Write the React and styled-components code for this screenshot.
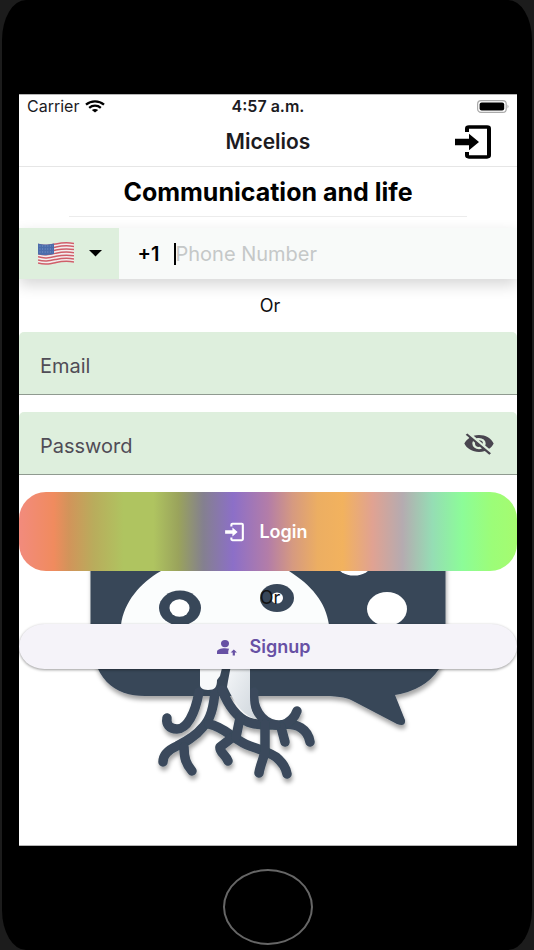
import React, { useState } from 'react'
import styled, { createGlobalStyle } from 'styled-components'

const GlobalStyle = createGlobalStyle`
    * {
        box-sizing: border-box;
    }

    body {
        margin: 0;
        background: #1c1c1c;
    }

    button, input {
        font: inherit;
        color: inherit;
        border: 0;
        padding: 0;
        margin: 0;
        background: none;
        outline: none;
    }

    button {
        cursor: pointer;
    }

    svg {
        display: block;
        flex-shrink: 0;
    }
`

const Device = styled.div`
    display: flex;
    flex-direction: column;
    min-height: 100vh;
    margin: 0 2px;
    padding: 94px 15px 5px 17px;
    background: #000;
    border-radius: 24px / 40px;
    font-family: Inter, "Liberation Sans", sans-serif;
    color: #1c1b1f;
`

const Screen = styled.main`
    display: flex;
    flex-direction: column;
    flex: 1;
    background: #fff;
    border: 1px solid #b5b5b5;
    border-width: 1px 0 1px 0;
    overflow: hidden;
`

const StatusBar = styled.div`
    display: grid;
    grid-template-columns: 1fr auto 1fr;
    align-items: center;
    height: 22px;
    padding: 0 8px;
    font-size: 16px;
    line-height: 20px;
`

const Carrier = styled.div`
    display: flex;
    align-items: center;
    gap: 6px;
`

const Clock = styled.time`
    font-weight: 600;
`

const BatterySlot = styled.div`
    justify-self: end;
`

const Header = styled.header`
    display: grid;
    grid-template-columns: 1fr auto 1fr;
    align-items: center;
    height: 50px;
    padding: 0 20px;
    border-bottom: 1px solid #e6e6e6;
`

const Title = styled.h2`
    grid-column: 2;
    margin: 0;
    font-size: 21px;
    line-height: 24px;
    font-weight: 600;
`

const HeaderButton = styled.button`
    justify-self: end;
    color: #000;
`

const Heading = styled.h1`
    width: 80%;
    margin: 0 auto 11px;
    padding: 9px 0 8px;
    border-bottom: 1px solid #ececec;
    font-size: 25px;
    line-height: 32px;
    font-weight: 700;
    text-align: center;
    white-space: nowrap;
    color: #000;
`

const PhoneRow = styled.div`
    display: flex;
    height: 51px;
    background: #f8faf9;
    box-shadow: 0 6px 14px rgba(0, 0, 0, 0.16);
    font-size: 20px;
    line-height: 24px;
`

const CountryButton = styled.button`
    display: flex;
    align-items: center;
    justify-content: center;
    gap: 15px;
    width: 20%;
    padding-left: 2px;
    background: #deefdd;
`

const PhoneLabel = styled.label`
    display: flex;
    align-items: center;
    flex: 1;
    gap: 14px;
    min-width: 0;
    padding-left: 19px;
    font-weight: 600;
    color: #000;
`

const PhoneInput = styled.input`
    flex: 1;
    min-width: 0;
    height: 22px;
    border-left: 2px solid #000;
    font-weight: 400;

    &::placeholder {
        color: #c5c8c8;
        opacity: 1;
    }
`

const Or = styled.p`
    position: relative;
    margin: 0;
    padding: 16px 0 16px 4px;
    font-size: 18px;
    line-height: 21px;
    text-align: center;
    color: #111;
`

const Field = styled.label`
    display: flex;
    align-items: center;
    gap: 12px;
    height: 63px;
    margin-bottom: 17px;
    padding: 6px 22px 0 21px;
    background: #deefdd;
    border-bottom: 1px solid #8f9a90;
    border-radius: 5px 5px 0 0;
    font-size: 20px;
    line-height: 24px;
    color: #504c56;
`

const FieldInput = styled.input`
    flex: 1;
    min-width: 0;
`

const EyeButton = styled.button`
    padding-bottom: 6px;
`

const Actions = styled.div`
    position: relative;
    display: flex;
    flex-direction: column;
    flex: 1;
`

const Mascot = styled.svg`
    position: absolute;
    top: 0;
    left: 0;
    width: 100%;
`

const ActionButton = styled.button`
    position: relative;
    display: flex;
    align-items: center;
    justify-content: center;
    gap: 12px;
    padding-right: 6px;
    font-size: 18px;
    line-height: 24px;
    font-weight: 600;
`

const LoginButton = styled(ActionButton)`
    height: 79px;
    border-radius: 27px;
    color: #fff;
    background: linear-gradient(
        90deg,
        #f28b7d 0%,
        #f08b5e 7%,
        #d2945a 10%,
        #b9ac5c 15%,
        #afc460 21%,
        #afc460 27%,
        #9aa35c 32%,
        #84808f 37%,
        #8c6fc8 43%,
        #b37da8 50%,
        #d69a80 55%,
        #ecae62 60%,
        #f2b25e 65%,
        #e0a292 71%,
        #b5abb0 77%,
        #95ddb4 83%,
        #8cfc98 89%,
        #9cfd78 95%,
        #a5fb70 100%
    );
`

const SignupButton = styled(ActionButton)`
    height: 45px;
    padding-right: 10px;
    border-radius: 26px / 23px;
    color: #6750a4;
    background: #f5f3f9;
    box-shadow: 0 1px 3px rgba(0, 0, 0, 0.4);
`

const HomeBar = styled.div`
    display: flex;
    justify-content: center;
    padding-top: 23px;
`

const HomeButton = styled.button`
    width: 90px;
    height: 76px;
    border: 2px solid #666;
    border-radius: 50%;
`

const WifiIcon = () => (
    <svg width="20" height="13" viewBox="0 0 20 13" fill="none" stroke="#000" strokeWidth="2.3">
        <path d="M1 4.6C6 .2 14 .2 19 4.6" />
        <path d="M4.2 7.8C7.5 4.9 12.5 4.9 15.8 7.8" />
        <path d="M10 12.6L6.8 10C8.6 8.5 11.4 8.5 13.2 10Z" fill="#000" stroke="none" />
    </svg>
)

const BatteryIcon = () => (
    <svg width="33" height="13" viewBox="0 0 33 13">
        <rect x="1.600" y=".7" width="28.6" height="11.6" rx="3.4" fill="none" stroke="#aaa" strokeWidth="1.2" />
        <rect x="3.600" y="2.4" width="24.6" height="8.2" rx="2" fill="#000" />
        <path d="M31.500 4.5Q33.500 6.5 31.500 8.5Z" fill="#aaa" />
    </svg>
)

const EnterIcon = ({ width, height }) => (
    <svg width={width} height={height} viewBox="0 0 24 24" preserveAspectRatio="none" fill="currentColor">
        <path d="M10 17V14H3V10H10V7L15 12L10 17M10 2H19A2 2 0 0 1 21 4V20A2 2 0 0 1 19 22H10A2 2 0 0 1 8 20V18H10V20H19V4H10V6H8V4A2 2 0 0 1 10 2Z" />
    </svg>
)

const EyeOffIcon = () => (
    <svg width="32" height="27" viewBox="0 0 24 24" preserveAspectRatio="none" fill="#49454f">
        <path d="M11.83 9L15 12.16C15 12.11 15 12.05 15 12A3 3 0 0 0 12 9C11.94 9 11.89 9 11.83 9M7.53 9.8L9.08 11.35C9.03 11.56 9 11.77 9 12A3 3 0 0 0 12 15C12.22 15 12.44 14.97 12.65 14.92L14.2 16.47C13.53 16.8 12.79 17 12 17A5 5 0 0 1 7 12C7 11.21 7.2 10.47 7.53 9.8M2 4.27L4.28 6.55L4.73 7C3.08 8.3 1.78 10 1 12C2.73 16.39 7 19.5 12 19.5C13.55 19.5 15.03 19.2 16.38 18.66L16.81 19.08L19.73 22L21 20.73L3.27 3M12 7A5 5 0 0 1 17 12C17 12.64 16.87 13.26 16.64 13.82L19.57 16.75C21.07 15.5 22.27 13.86 23 12C21.27 7.61 17 4.5 12 4.5C10.6 4.5 9.26 4.75 8 5.2L10.17 7.35C10.74 7.13 11.35 7 12 7Z" />
    </svg>
)

const AccountUpIcon = () => (
    <svg width="22" height="18" viewBox="0 0 22 18" fill="currentColor">
        <ellipse cx="9" cy="5.6" rx="4" ry="3.7" />
        <path d="M1 16V14C1 11.5 4.5 10.3 9 10.3C10.6 10.3 12 10.5 13.2 10.8C12.3 12.2 12 14 12.4 16Z" />
        <path d="M17.8 11.4L21 14.4H18.9V17.6H16.7V14.4H14.6Z" />
    </svg>
)

const CaretIcon = () => (
    <svg width="13" height="7" viewBox="0 0 13 7">
        <path d="M0 0H13L6.5 6.4Z" fill="#000" />
    </svg>
)

const stripe = y => `M0 ${y + 1}C7 ${y + 3} 11 ${y + 2} 18 ${y + 0.5}C25 ${y - 1} 30 ${y - 1} 36 ${y}`

const FlagIcon = () => (
    <svg width="36" height="23" viewBox="0 0 36 23">
        <path
            d="M0 1.5C7 3.5 11 2.5 18 1C25 -.6 30 -.6 36 .6V20.6C30 19.4 25 19.4 18 21C11 22.6 7 23.2 0 21.5Z"
            fill="#f3eeee"
        />
        {[0, 1, 2, 3, 4, 5, 6].map(i => (
            <path key={i} d={stripe(i * 3.1 + 1.4)} fill="none" stroke="#cf5f69" strokeWidth="1.5" />
        ))}
        <path d="M0 1.5C6 3 10 2.7 16 1.4V12C10 13.4 6 13.5 0 12.4Z" fill="#4a6cab" />
        {[4, 7, 10].map(y => (
            <path key={y} d={`M1.5 ${y}H15`} stroke="#7f99c9" strokeWidth="1" strokeDasharray="1 1.6" />
        ))}
    </svg>
)

// Mushroom with roots inside a speech bubble
const MascotArt = () => (
    <Mascot viewBox="19 492 498 300" aria-hidden="true">
        <defs>
            <linearGradient id="stem" x1="0" y1="0" x2="1" y2="1">
                <stop offset="0" stopColor="#f6f8fa" />
                <stop offset="1" stopColor="#cfd6dc" />
            </linearGradient>
            <filter id="lift" x="-5%" y="-5%" width="110%" height="115%">
                <feDropShadow dx="1" dy="4" stdDeviation="2" floodColor="#000" floodOpacity=".35" />
            </filter>
        </defs>
        <g filter="url(#lift)">
            <path
                d="M90.500 500V630C91 680 115 696 145 696H330C345 697 350 699 355 702L397 724Q406 727 405 720L395 695Q425 690 439 669Q446 655 445.500 635V500Z"
                fill="#384759"
            />
            <g fill="none" stroke="#3a4a5b" strokeWidth="9.500" strokeLinecap="round" strokeLinejoin="round">
                <path d="M199 692C195 714 187 729 177 729C169 729 166 724 167 718" />
                <path d="M215 690C214 707 211 719 203 727C195 737 185 742 177 746C168 750 163 755 163 762" />
                <path d="M184 747C184 758 186 764 192 771" />
                <path d="M209 724C225 727 235 741 250 746C262 750 270 753 276 757C282 762 286 768 287 774" />
                <path d="M233 737L220 747C219 752 226 755 228 761" />
                <path d="M222 690C228 705 236 717 248 722C258 726 270 725 280 725C298 722 308 730 310 742" />
                <path d="M283 725C290 722 295 717 297 711" />
                <path d="M281 727L285 742" />
                <path d="M254 692C252 706 260 722 276 725" />
                <path d="M240 718L236 737" />
                <path d="M265 724V752C263 760 260 766 259 773" />
            </g>
        </g>
        <path d="M121 625C124 602 140 583 161 571C195 550 255 550 289 571C311 585 326 602 329 625V640H121Z" fill="#fbfdfd" />
        <path d="M200 660H224L220 676L217 680C217 687 215 690 208 690C202 690 200 687 200 685Z" fill="#f7f9fa" />
        <path d="M232 660H250V697C250 706 252 713 256 719C244 716 236 706 227 687L228 681Z" fill="url(#stem)" />
        <ellipse cx="180" cy="608" rx="21" ry="17.500" fill="#384759" />
        <ellipse cx="179.500" cy="608" rx="10" ry="8.800" fill="#fff" />
        <ellipse cx="277" cy="598" rx="17" ry="14" fill="#384759" />
        <ellipse cx="277" cy="598" rx="6" ry="5.500" fill="#fff" />
        <ellipse cx="354" cy="565" rx="17" ry="10.500" fill="#fff" />
        <ellipse cx="387" cy="609" rx="20" ry="17" fill="#fff" />
    </Mascot>
)

const App = () => {
    const [showPassword, setShowPassword] = useState(false)

    return (
        <>
            <GlobalStyle />
            <Device>
                <Screen>
                    <StatusBar>
                        <Carrier>Carrier <WifiIcon /></Carrier>
                        <Clock>4:57 a.m.</Clock>
                        <BatterySlot><BatteryIcon /></BatterySlot>
                    </StatusBar>

                    <Header>
                        <Title>Micelios</Title>
                        <HeaderButton type="button" aria-label="Enter">
                            <EnterIcon width="48" height="40" />
                        </HeaderButton>
                    </Header>

                    <Heading>Communication and life</Heading>

                    <PhoneRow>
                        <CountryButton type="button" aria-label="Country">
                            <FlagIcon />
                            <CaretIcon />
                        </CountryButton>
                        <PhoneLabel>
                            +1
                            <PhoneInput type="tel" placeholder="Phone Number" />
                        </PhoneLabel>
                    </PhoneRow>

                    <Or>Or</Or>

                    <Field>
                        Email
                        <FieldInput type="email" />
                    </Field>
                    <Field>
                        Password
                        <FieldInput type={showPassword ? 'text' : 'password'} />
                        <EyeButton
                            type="button"
                            aria-label="Show password"
                            onClick={() => setShowPassword(!showPassword)}
                        >
                            <EyeOffIcon />
                        </EyeButton>
                    </Field>

                    <Actions>
                        <MascotArt />
                        <LoginButton type="button">
                            <EnterIcon width="25" height="22" />
                            Login
                        </LoginButton>
                        <Or>Or</Or>
                        <SignupButton type="button">
                            <AccountUpIcon />
                            Signup
                        </SignupButton>
                    </Actions>
                </Screen>

                <HomeBar>
                    <HomeButton type="button" aria-label="Home" />
                </HomeBar>
            </Device>
        </>
    )
}

export default App
